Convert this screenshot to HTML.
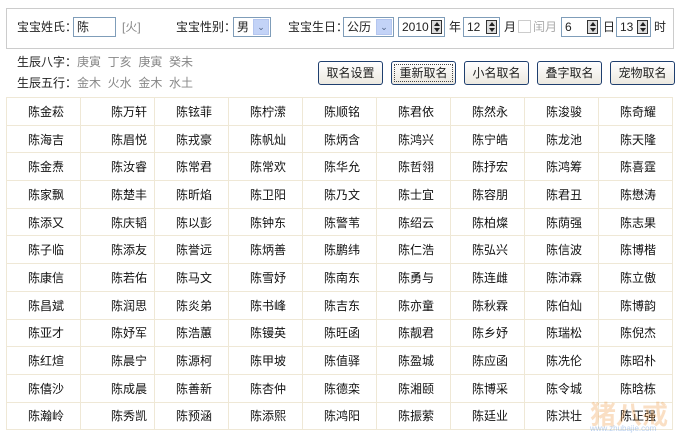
<!DOCTYPE html>
<html><head><meta charset="utf-8"><style>
*{margin:0;padding:0;box-sizing:border-box}
body{width:680px;height:435px;background:#fff;font:12px "Liberation Sans","Noto Sans CJK SC",sans-serif;color:#222;position:relative;overflow:hidden}
.a{position:absolute;white-space:nowrap;line-height:14px}
.g{color:#888}
.box{position:absolute;left:6px;top:8px;width:668px;height:41px;border:1px solid #ccc}
.in{position:absolute;border:1px solid #7f9db9;background:#fff;height:20px;font-size:12px;line-height:18px;padding-left:3px}
.dd{position:absolute;right:1px;top:1px;width:16px;height:16px;background:#c3d3f7;border:1px solid #b4c6ef;color:#4d6185;font-size:9px;text-align:center;line-height:14px}
.sp{position:absolute;right:2px;top:2px;width:11px;height:14px;border:1px solid #333;background:#ddd}
.sp:before{content:"";position:absolute;left:2px;top:1px;border:3px solid transparent;border-bottom:4px solid #222;border-top:0}
.sp:after{content:"";position:absolute;left:2px;bottom:1px;border:3px solid transparent;border-top:4px solid #222;border-bottom:0}
.btn{position:absolute;top:61px;height:24px;width:65px;border:1px solid #1f3f6f;border-radius:3px;background:linear-gradient(#fff,#ece9e0);text-align:center;line-height:22px;font-size:12px}
table{position:absolute;left:6px;top:97px;border-collapse:collapse;table-layout:fixed;width:667px;border:1px solid #c8c8c8}
td{width:74px;height:27.7px;border:1px solid #efe8d6;padding-left:21px;font-size:12px;color:#111;white-space:nowrap}
td:nth-child(2){padding-left:30px}
</style></head><body>
<div class="box"></div>
<div class="a" style="left:17px;top:20px">宝宝姓氏：</div>
<div class="in" style="left:73px;top:17px;width:43px">陈</div>
<div class="a g" style="left:122px;top:20px">[火]</div>
<div class="a" style="left:176px;top:20px">宝宝性别：</div>
<div class="in" style="left:233px;top:17px;width:38px">男<span class="dd">&#8964;</span></div>
<div class="a" style="left:288px;top:20px">宝宝生日：</div>
<div class="in" style="left:343px;top:17px;width:51px">公历<span class="dd">&#8964;</span></div>
<div class="in" style="left:398px;top:17px;width:47px">2010<span class="sp"></span></div>
<div class="a" style="left:449px;top:20px">年</div>
<div class="in" style="left:463px;top:17px;width:37px">12<span class="sp"></span></div>
<div class="a" style="left:504px;top:20px">月</div>
<div style="position:absolute;left:518px;top:20px;width:13px;height:13px;border:1px solid #ccc"></div>
<div class="a g" style="left:533px;top:20px;color:#aaa">闰月</div>
<div class="in" style="left:561px;top:17px;width:40px">6<span class="sp"></span></div>
<div class="a" style="left:603px;top:20px">日</div>
<div class="in" style="left:616px;top:17px;width:35px">13<span class="sp"></span></div>
<div class="a" style="left:654px;top:20px">时</div>
<div class="a" style="left:17px;top:55px">生辰八字：<span class="g">庚寅&nbsp; 丁亥&nbsp; 庚寅&nbsp; 癸未</span></div>
<div class="a" style="left:17px;top:76px">生辰五行：<span class="g">金木&nbsp; 火水&nbsp; 金木&nbsp; 水土</span></div>
<div class="btn" style="left:318px">取名设置</div>
<div class="btn" style="left:391px;outline:1px dotted #444;outline-offset:-4px">重新取名</div>
<div class="btn" style="left:464px">小名取名</div>
<div class="btn" style="left:537px">叠字取名</div>
<div class="btn" style="left:610px">宠物取名</div>
<table>
<tr><td>陈金菘</td><td>陈万轩</td><td>陈铉菲</td><td>陈柠潆</td><td>陈顺铭</td><td>陈君依</td><td>陈然永</td><td>陈浚骏</td><td>陈奇耀</td></tr>
<tr><td>陈海吉</td><td>陈眉悦</td><td>陈戎豪</td><td>陈帆灿</td><td>陈炳含</td><td>陈鸿兴</td><td>陈宁皓</td><td>陈龙池</td><td>陈天隆</td></tr>
<tr><td>陈金焘</td><td>陈汝睿</td><td>陈常君</td><td>陈常欢</td><td>陈华允</td><td>陈哲翎</td><td>陈抒宏</td><td>陈鸿筹</td><td>陈喜霆</td></tr>
<tr><td>陈家飘</td><td>陈楚丰</td><td>陈昕焰</td><td>陈卫阳</td><td>陈乃文</td><td>陈士宜</td><td>陈容朋</td><td>陈君丑</td><td>陈懋涛</td></tr>
<tr><td>陈添又</td><td>陈庆韬</td><td>陈以彭</td><td>陈钟东</td><td>陈警苇</td><td>陈绍云</td><td>陈柏燦</td><td>陈荫强</td><td>陈志果</td></tr>
<tr><td>陈子临</td><td>陈添友</td><td>陈誉远</td><td>陈炳善</td><td>陈鹏纬</td><td>陈仁浩</td><td>陈弘兴</td><td>陈信波</td><td>陈博楷</td></tr>
<tr><td>陈康信</td><td>陈若佑</td><td>陈马文</td><td>陈雪妤</td><td>陈南东</td><td>陈勇与</td><td>陈连雌</td><td>陈沛霖</td><td>陈立傲</td></tr>
<tr><td>陈昌斌</td><td>陈润思</td><td>陈炎弟</td><td>陈书峰</td><td>陈吉东</td><td>陈亦童</td><td>陈秋霖</td><td>陈伯灿</td><td>陈博韵</td></tr>
<tr><td>陈亚才</td><td>陈妤军</td><td>陈浩蕙</td><td>陈镘英</td><td>陈旺函</td><td>陈靓君</td><td>陈乡妤</td><td>陈瑞松</td><td>陈倪杰</td></tr>
<tr><td>陈红煊</td><td>陈晨宁</td><td>陈源柯</td><td>陈甲坡</td><td>陈值驿</td><td>陈盈城</td><td>陈应函</td><td>陈冼伦</td><td>陈昭朴</td></tr>
<tr><td>陈僖沙</td><td>陈成晨</td><td>陈善新</td><td>陈杏仲</td><td>陈德栾</td><td>陈湘颐</td><td>陈博采</td><td>陈令城</td><td>陈晗栋</td></tr>
<tr><td>陈瀚岭</td><td>陈秀凯</td><td>陈预涵</td><td>陈添熙</td><td>陈鸿阳</td><td>陈振萦</td><td>陈廷业</td><td>陈洪壮</td><td>陈正强</td></tr>
</table>
<div class="a" style="left:590px;top:402px;font-size:26px;line-height:26px;color:rgba(240,150,60,.3);font-weight:bold">猪八戒</div>
<div class="a" style="left:590px;top:424px;font-size:8px;line-height:9px;color:rgba(100,150,220,.45)">www.zhubajie.com</div>
</body></html>
